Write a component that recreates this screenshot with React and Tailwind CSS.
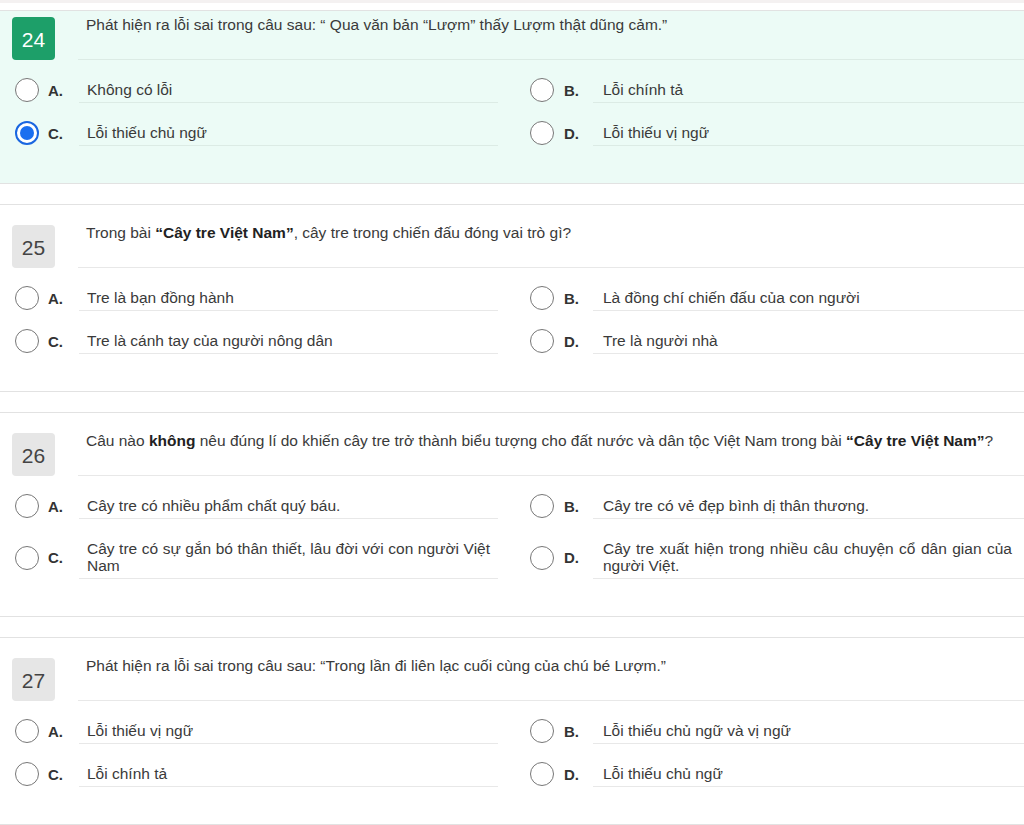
import React from "react";

const questions = [
  {
    n: "24",
    active: true,
    q: <>Phát hiện ra lỗi sai trong câu sau: “ Qua văn bản “Lượm” thấy Lượm thật dũng cảm.”</>,
    opts: ["Không có lỗi", "Lỗi chính tả", "Lỗi thiếu chủ ngữ", "Lỗi thiếu vị ngữ"],
    selected: 2,
  },
  {
    n: "25",
    q: (
      <>
        Trong bài <b className="font-bold text-[#222]">“Cây tre Việt Nam”</b>, cây tre trong chiến đấu đóng vai trò gì?
      </>
    ),
    opts: [
      "Tre là bạn đồng hành",
      "Là đồng chí chiến đấu của con người",
      "Tre là cánh tay của người nông dân",
      "Tre là người nhà",
    ],
  },
  {
    n: "26",
    q: (
      <>
        Câu nào <b className="font-bold text-[#222]">không</b> nêu đúng lí do khiến cây tre trở thành biểu tượng cho đất nước và dân tộc Việt Nam trong bài{" "}
        <b className="font-bold text-[#222]">“Cây tre Việt Nam”</b>?
      </>
    ),
    opts: [
      "Cây tre có nhiều phẩm chất quý báu.",
      "Cây tre có vẻ đẹp bình dị thân thương.",
      "Cây tre có sự gắn bó thân thiết, lâu đời với con người Việt Nam",
      "Cây tre xuất hiện trong nhiều câu chuyện cổ dân gian của người Việt.",
    ],
  },
  {
    n: "27",
    q: <>Phát hiện ra lỗi sai trong câu sau: “Trong lần đi liên lạc cuối cùng của chú bé Lượm.”</>,
    opts: ["Lỗi thiếu vị ngữ", "Lỗi thiếu chủ ngữ và vị ngữ", "Lỗi chính tả", "Lỗi thiếu chủ ngữ"],
  },
];

function Radio({ on }) {
  if (on) {
    return (
      <span className="-my-[4px] flex h-[24px] w-[24px] shrink-0 items-center justify-center rounded-full border-2 border-[#1a66e0] bg-white">
        <span className="h-[14px] w-[14px] rounded-full bg-[#1a6ff0]" />
      </span>
    );
  }
  return <span className="-my-[4px] block h-[24px] w-[24px] shrink-0 rounded-full border-[1.5px] border-[#777] bg-white" />;
}

function Option({ letter, text, on, right, line }) {
  return (
    <div className={right ? "flex pl-[25px]" : "flex pl-[15px] pr-[7px]"}>
      <div className="flex items-center pt-[21px] pb-[4px]">
        <Radio on={on} />
        <span
          className={
            (right ? "ml-[10px] w-[29px] " : "ml-[9px] w-[31px] ") +
            "text-[15px] font-bold leading-[17px] text-[#333]"
          }
        >
          {letter}.
        </span>
      </div>
      <div
        className={
          (right ? "pl-[10px] pr-[12px] " : "pl-[8px] pr-[8px] ") +
          "flex-1 border-b pt-[21px] pb-[4px] text-justify text-[15.5px] leading-[17px] text-[#3a3a3a] " +
          line
        }
      >
        {text}
      </div>
    </div>
  );
}

function Card({ data, first }) {
  const line = data.active ? "border-[#dcebe5]" : "border-[#e8e8e8]";
  return (
    <div
      className={
        (data.active ? "bg-[#ecfbf6] " : "bg-white ") +
        (first ? "pt-[6px] " : "mt-[20px] pt-[20px] ") +
        "border-y border-[#e2e2e2] pb-[37px]"
      }
    >
      <div className="flex">
        <div
          className={
            (data.active ? "bg-[#1d9f69] text-white " : "bg-[#e6e6e6] text-[#444] ") +
            "ml-[12px] flex h-[43px] w-[43px] shrink-0 items-center justify-center rounded-[4px] pt-[2px] text-[21px]"
          }
        >
          {data.n}
        </div>
        <div className={"ml-[23px] flex-1 border-b pl-[8px] text-[15.5px] leading-[15px] text-[#3a3a3a] " + line}>
          {data.q}
        </div>
      </div>
      <div className="grid grid-cols-[505px_1fr]">
        {data.opts.map((t, i) => (
          <Option
            key={i}
            letter={"ABCD"[i]}
            text={t}
            on={data.selected === i}
            right={i % 2 === 1}
            line={line}
          />
        ))}
      </div>
    </div>
  );
}

export default function App() {
  return (
    <div className="h-[825px] w-[1024px] overflow-hidden bg-white" style={{ fontFamily: '"Liberation Sans", Arial, sans-serif' }}>
      <div className="h-[3px] bg-[#f4f1f1]" />
      <div className="h-[7px] bg-white" />
      {questions.map((q, i) => (
        <Card key={q.n} data={q} first={i === 0} />
      ))}
    </div>
  );
}
